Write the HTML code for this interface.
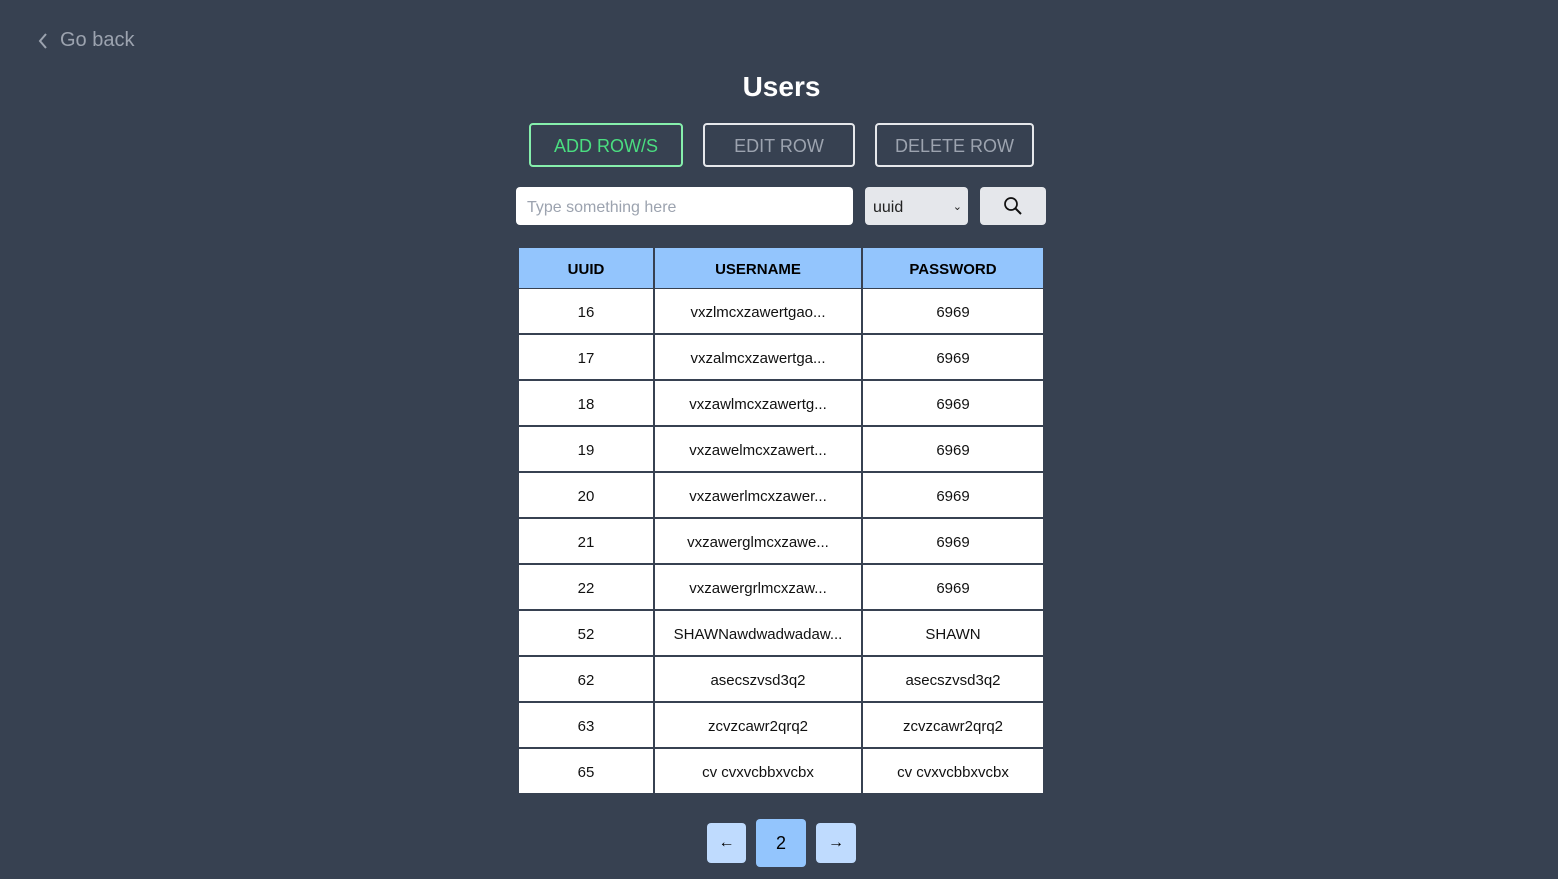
<!DOCTYPE html><html><head><style>
body{margin:0;width:1558px;height:879px;background:#374151;font-family:"Liberation Sans",sans-serif;position:relative;overflow:hidden}
.a{position:absolute}
.btn{position:absolute;top:123px;height:38px;padding-top:2px;border:2px solid #e5e7eb;border-radius:4px;color:#9ca3af;font-size:18px;display:flex;align-items:center;justify-content:center;box-sizing:content-box}
.cell{position:absolute;background:#fff;color:#111;font-size:15px;display:flex;align-items:center;justify-content:center;padding-top:3px;box-sizing:border-box}
.h{background:#93c5fd;font-weight:bold;color:#000}
</style></head><body>
<div class="a" style="left:36px;top:29px;color:#9ca3af;font-size:20px;display:flex;align-items:center"><svg width="14" height="20" viewBox="0 0 14 20"><path d="M10 3 L4 10 L10 17" stroke="#9ca3af" stroke-width="2" fill="none"/></svg><span style="margin-left:10px">Go back</span></div>
<div class="a" style="left:0;width:1563px;top:71px;text-align:center;color:#fff;font-size:28px;font-weight:bold">Users</div>
<div class="btn" style="left:529px;width:150px;border-color:#86efac;color:#4ade80">ADD ROW/S</div>
<div class="btn" style="left:703px;width:148px">EDIT ROW</div>
<div class="btn" style="left:875px;width:155px">DELETE ROW</div>
<div class="a" style="left:516px;top:187px;width:337px;height:38px;background:#fff;border-radius:4px;color:#9ca3af;font-size:16px;line-height:42px;padding-left:11px;box-sizing:border-box">Type something here</div>
<div class="a" style="left:865px;top:187px;width:103px;height:38px;background:#e5e7eb;border-radius:4px;font-size:16px;line-height:42px;padding-left:8px;box-sizing:border-box;color:#222">uuid<span style="position:absolute;right:6px;top:-1px;font-size:11px">⌄</span></div>
<div class="a" style="left:980px;top:187px;width:66px;height:38px;background:#e5e7eb;border-radius:4px"><svg class="a" style="left:23px;top:9px" width="20" height="20" viewBox="0 0 20 20"><circle cx="8" cy="8" r="6" stroke="#111" stroke-width="1.7" fill="none"/><path d="M12.5 12.5 L18 18" stroke="#111" stroke-width="2"/></svg></div>
<div id="t"></div>
<div class="a" style="left:707px;top:823px;width:39px;height:40px;background:#bfdbfe;border-radius:4px;text-align:center;line-height:40px;font-size:16px">←</div>
<div class="a" style="left:756px;top:819px;width:50px;height:48px;background:#93c5fd;border-radius:4px;text-align:center;line-height:48px;font-size:18px">2</div>
<div class="a" style="left:816px;top:823px;width:40px;height:40px;background:#bfdbfe;border-radius:4px;text-align:center;line-height:40px;font-size:16px">→</div>
<script>
var cols=[[519,134],[655,206],[863,180]];
var rows=[["UUID","USERNAME","PASSWORD"],["16","vxzlmcxzawertgao...","6969"],["17","vxzalmcxzawertga...","6969"],["18","vxzawlmcxzawertg...","6969"],["19","vxzawelmcxzawert...","6969"],["20","vxzawerlmcxzawer...","6969"],["21","vxzawerglmcxzawe...","6969"],["22","vxzawergrlmcxzaw...","6969"],["52","SHAWNawdwadwadaw...","SHAWN"],["62","asecszvsd3q2","asecszvsd3q2"],["63","zcvzcawr2qrq2","zcvzcawr2qrq2"],["65","cv cvxvcbbxvcbx","cv cvxvcbbxvcbx"]];
var h="";rows.forEach(function(r,i){var top=i==0?248:289+(i-1)*46,ht=i==0?40:44;r.forEach(function(c,j){h+='<div class="cell'+(i==0?' h':'')+'" style="left:'+cols[j][0]+'px;width:'+cols[j][1]+'px;top:'+top+'px;height:'+ht+'px">'+c+'</div>';});});
document.getElementById("t").innerHTML=h;
</script>
</body></html>
